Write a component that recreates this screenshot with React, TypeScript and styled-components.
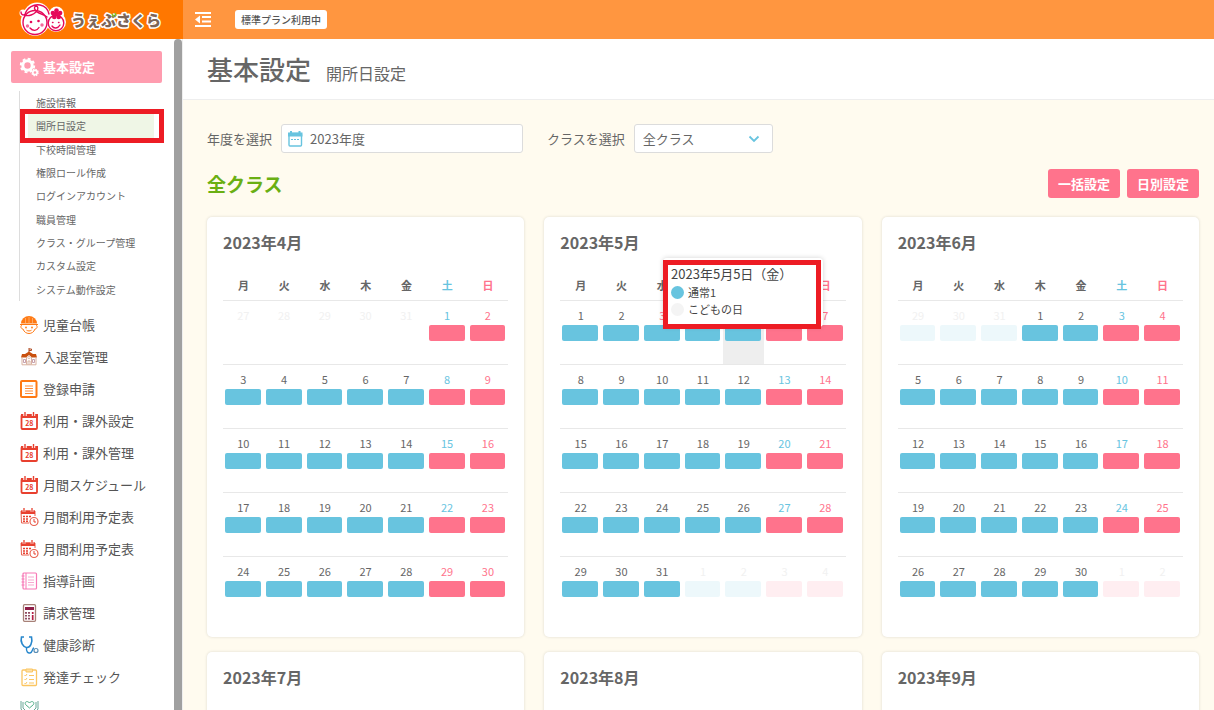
import React from 'react';
import styled, { createGlobalStyle, css } from 'styled-components';

const GlobalStyle = createGlobalStyle`
  *, *::before, *::after { box-sizing: border-box; }
  body {
    margin: 0;
    background: #fffbef;
    color: #666;
    font-family: 'Noto Sans CJK JP', 'Noto Sans', sans-serif;
    font-size: 13px;
  }
  button, input, select { font: inherit; color: inherit; }
  h1, h2, h3, p, ul { margin: 0; padding: 0; }
  ul { list-style: none; }
  a { color: inherit; text-decoration: none; }
`;

const blue = '#68c4df';
const pink = '#ff738c';

const Shell = styled.div`
  display: grid;
  grid-template-columns: 183px minmax(0, 1fr);
  grid-template-rows: 39px minmax(0, 1fr);
  height: 100vh;
  overflow: hidden;
`;

const Brand = styled.a`
  display: flex;
  align-items: center;
  padding-left: 19px;
  background: #ff7700;
`;

const TopBar = styled.header`
  display: flex;
  align-items: center;
  gap: 23px;
  padding-left: 12px;
  background: #ff9640;
`;

const MenuButton = styled.button`
  display: flex;
  padding: 0;
  border: 0;
  background: none;
  color: #fff;
`;

const PlanBadge = styled.span`
  padding: 0 6px;
  border-radius: 3px;
  background: #fff;
  color: #555;
  font-size: 10px;
  font-weight: 500;
  line-height: 19px;
`;

const Sidebar = styled.aside`
  display: flex;
  border-right: 1px solid #eee;
  background: #fff;
  overflow: hidden;
`;

const Nav = styled.nav`
  flex: 1;
  padding: 12px 12px 0 11px;
`;

const ScrollThumb = styled.div`
  width: 8px;
  border-radius: 4px 4px 0 0;
  background: #a0a0a0;
`;

const NavItem = styled.a<{ $active?: boolean }>`
  display: flex;
  align-items: center;
  gap: 5px;
  height: 32px;
  padding-left: 9px;
  white-space: nowrap;
  color: #555;
  ${(p) => p.$active && css`
    border-radius: 2px;
    background: #ff9caf;
    color: #fff;
    font-weight: 700;
  `}
  svg { flex: none; overflow: visible; }
`;

const NavLabel = styled.span`
  padding-bottom: 2px;
`;

const SubMenu = styled.ul`
  display: grid;
  grid-auto-rows: 1fr;
  height: 210px;
  margin: 8px 8px;
  border-left: 1px solid #ddd;
`;

const SubItem = styled.li<{ $active?: boolean }>`
  position: relative;
  display: flex;
  align-items: center;
  margin-left: 8px;
  padding-left: 8px;
  font-size: 10px;
  white-space: nowrap;
  background: ${(p) => (p.$active ? '#eff6e6' : 'transparent')};
`;

const RedFrame = styled.span`
  position: absolute;
  z-index: 3;
  border: 5px solid #ed1c24;
  pointer-events: none;
`;

const MenuFrame = styled(RedFrame)`
  inset: -5px -10px -5px -8px;
`;

const Main = styled.main`
  overflow: auto;
  scrollbar-width: none;
`;

const PageHead = styled.div`
  display: flex;
  align-items: baseline;
  gap: 15px;
  height: 61px;
  padding: 0 24px;
  border-bottom: 1px solid #eee;
  background: #fff;
  line-height: 59px;
`;

const PageTitle = styled.h1`
  font-size: 26px;
  font-weight: 500;
`;

const PageSubtitle = styled.p`
  font-size: 16px;
`;

const Content = styled.div`
  padding: 24px 15px 15px 24px;
`;

const Filters = styled.form`
  display: flex;
  gap: 24px;
`;

const Field = styled.div`
  display: flex;
  align-items: center;
  gap: 9px;
`;

const Control = styled.div<{ $width: number }>`
  display: flex;
  align-items: center;
  width: ${(p) => p.$width}px;
  height: 29px;
  padding: 0 12px 0 6px;
  border: 1px solid #dcdcdc;
  border-radius: 3px;
  background: #fff;
  input, select {
    flex: 1;
    min-width: 0;
    height: 27px;
    padding: 0;
    border: 0;
    outline: 0;
    background: none;
    appearance: none;
  }
  input { padding-left: 7px; }
  select { padding-left: 2px; }
`;

const ClassRow = styled.div`
  display: flex;
  align-items: center;
  justify-content: space-between;
  margin: 16px 0 19px;
`;

const ClassTitle = styled.h2`
  color: #6aaf13;
  font-size: 19px;
  font-weight: 700;
  line-height: 29px;
`;

const Actions = styled.div`
  display: flex;
  gap: 7px;
`;

const ActionButton = styled.button`
  width: 72px;
  height: 29px;
  padding: 0;
  border: 0;
  border-radius: 3px;
  background: ${pink};
  color: #fff;
  font-weight: 700;
`;

const Calendars = styled.div`
  display: grid;
  grid-template-columns: repeat(3, minmax(0, 1fr));
  gap: 15px 20px;
`;

const Card = styled.section`
  min-height: 420px;
  padding: 15px 16px;
  border-radius: 5px;
  background: #fff;
  box-shadow: 0 0 3px rgba(0, 0, 0, 0.14);
`;

const CardTitle = styled.h3`
  font-size: 16px;
  font-weight: 700;
  line-height: 20px;
`;

const MonthTable = styled.table`
  width: 100%;
  margin-top: 18px;
  border-collapse: collapse;
  table-layout: fixed;
  th, td { padding: 0; text-align: center; }
  th { height: 30px; font-size: 11px; font-weight: 700; }
  td { height: 64px; border-top: 1px solid #e8e8e8; font-size: 11px; vertical-align: top; }
`;

type Tone = 'text' | 'sat' | 'sun' | 'muted';
const toneColor: Record<Tone, string> = { text: '#666', sat: blue, sun: pink, muted: '#f1f1f1' };

const WeekDay = styled.th<{ $tone: Tone }>`
  color: ${(p) => toneColor[p.$tone]};
`;

const DayCell = styled.td<{ $hover: boolean }>`
  position: relative;
  background: ${(p) => (p.$hover ? '#eee' : 'transparent')};
`;

const DayNumber = styled.div<{ $tone: Tone }>`
  margin: 6px 0 1px;
  color: ${(p) => toneColor[p.$tone]};
  line-height: 17px;
`;

const Bar = styled.div<{ $color: string; $faded: boolean }>`
  height: 16px;
  margin: 0 3px 0 2px;
  border-radius: 2px;
  background: ${(p) => p.$color};
  opacity: ${(p) => (p.$faded ? 0.12 : 1)};
`;

const Tooltip = styled.div`
  position: absolute;
  z-index: 2;
  right: -59px;
  bottom: 37px;
  width: 160px;
  height: 69px;
  padding: 6px 8px;
  border-radius: 4px;
  background: #fff;
  box-shadow: 0 0 5px rgba(0, 0, 0, 0.18);
  color: #444;
  text-align: left;
  white-space: nowrap;
`;

const TooltipFrame = styled(RedFrame)`
  inset: 2px 2px -2px 0;
`;

const TooltipDate = styled.p`
  font-size: 13px;
  line-height: 20px;
`;

const TooltipLine = styled.p`
  display: flex;
  align-items: center;
  gap: 4px;
  font-size: 11px;
  line-height: 17px;
`;

const Dot = styled.span<{ $color: string }>`
  width: 13px;
  height: 13px;
  border-radius: 50%;
  background: ${(p) => p.$color};
`;

const Logo = () => (
  <svg width="146" height="36" viewBox="0 0 146 36" role="img" aria-label="うぇぶさくら">
    <g fill="#fff">
      <circle cx="16" cy="19.500" r="14.300" />
      <circle cx="18" cy="14" r="13.500" />
      <circle cx="4" cy="11" r="3.500" />
      <circle cx="37" cy="20" r="10" />
      <circle cx="37.500" cy="12" r="7.500" />
    </g>
    <g fill="none" stroke="#e5095a" strokeWidth="1.400" strokeLinecap="round">
      <circle cx="37" cy="21" r="7.800" />
      <circle cx="16" cy="20.500" r="12" fill="#fff" />
      <path d="M2 10c0 2.500 2 3.500 4 2.500C8 5 15 2 21 3c5 1 8 4 9 9M5 13c5 2 10-1 12-3 3-3 2-6 0-6-2.500.5-2 5 3 7 3 1.500 6 2 8 4" />
      <path d="M11 26c3 3.500 7 3 9-.5M33 24c2 3 6 2.500 8-1M33.500 20.500h.5M39.500 20.500h.5" />
    </g>
    <g fill="#e5095a">
      <circle cx="12" cy="20" r="1.300" /><circle cx="19.500" cy="19" r="1.300" />
      <circle cx="37.500" cy="8.500" r="2.300" /><circle cx="33.900" cy="11" r="2.300" /><circle cx="41.100" cy="11" r="2.300" />
      <circle cx="35.300" cy="15" r="2.300" /><circle cx="39.700" cy="15" r="2.300" /><circle cx="37.500" cy="12" r="2.500" />
    </g>
    <g fill="#f36a9a"><circle cx="8.500" cy="24" r="1.700" /><circle cx="23" cy="23" r="1.700" /></g>
    <text
      x="52" y="24" fontSize="15" fontWeight="900" fill="#7c6558" stroke="#fff" strokeWidth="3"
      strokeLinejoin="round" paintOrder="stroke" fontFamily="'Noto Sans CJK JP', sans-serif"
    >うぇぶさくら</text>
    <path d="M93 12l2 3M96 11l1 3" stroke="#7fc31c" strokeWidth="1.500" />
  </svg>
);

const OutdentIcon = () => (
  <svg width="17" height="15" viewBox="0 0 17 15" aria-hidden="true" fill="#fff">
    <path d="M0 0h16v2H0zM7 4h9v2H7zM7 8.500h9v2H7zM0 13h16v2H0zM5 3.500v8L0 7.500z" />
  </svg>
);

const GearsIcon = () => (
  <svg width="18" height="18" viewBox="0 0 18 18" aria-hidden="true" fill="none">
    <circle cx="7.500" cy="7.500" r="4.700" stroke="#fff" strokeWidth="3" />
    <circle cx="7.500" cy="7.500" r="6.700" stroke="#fff" strokeWidth="2" strokeDasharray="2.900 2.362" />
    <circle cx="15" cy="14.500" r="2.200" stroke="#fff" strokeWidth="1.700" />
    <circle cx="15" cy="14.500" r="3.200" stroke="#fff" strokeWidth="1.200" strokeDasharray="1.400 1.113" />
  </svg>
);

const svgProps = { width: 18, height: 18, viewBox: '0 0 18 18', 'aria-hidden': true, fill: 'none' } as const;

const ChildIcon = () => (
  <svg {...svgProps}>
    <path d="M1 7.500a8 7.500 0 0 1 16 0z" fill="#ff7a14" />
    <path d="M5.500 2v5M12.500 2v5M9 1v6" stroke="#ffb477" strokeWidth=".8" />
    <path d="M0 8.500h18M2 9c-2 1-1 4 1 4 1 3 3.500 4.500 6 4.500s5-1.500 6-4.500c2 0 3-3 1-4" stroke="#ff7a14" />
    <circle cx="6" cy="11.500" r=".9" fill="#ff7a14" /><circle cx="12" cy="11.500" r=".9" fill="#ff7a14" />
    <path d="M6.500 14.200c1.500 1 3.500 1 5 0" stroke="#ff7a14" />
  </svg>
);

const SchoolIcon = () => (
  <svg {...svgProps}>
    <path d="M9 0v5M9 1h2.500v1.500H9" stroke="#b04a20" />
    <path d="M9 3.500l4 2.500h3l1 3.500h-5L9 7 6 9.500H1L2 6h3z" fill="#c9500e" />
    <path d="M2 9.500v7.300h14V9.500M6.500 9v7.500M11.500 9v7.500M8 17v-4h2v4" stroke="#d9b2a0" />
    <circle cx="9" cy="9.500" r="1.200" stroke="#d9b2a0" strokeWidth=".8" />
    <path d="M3.500 11.500h2v3h-2zM12.500 11.500h2v3h-2z" stroke="#b98a9a" strokeWidth=".8" />
  </svg>
);

const ListIcon = () => (
  <svg {...svgProps}>
    <rect x="1" y="1" width="15.500" height="16" rx="1" stroke="#ff7a14" strokeWidth="2" />
    <path d="M5 6h8M5 8.500h8M5 11h8M5 13.500h8" stroke="#ff8d3a" />
  </svg>
);

const Calendar28Icon = () => (
  <svg {...svgProps}>
    <rect x="1.500" y="3" width="15.500" height="14" rx="1" stroke="#e8402f" strokeWidth="1.800" />
    <path d="M1 2h17v4H1z" fill="#e8402f" />
    <path d="M5 0v4M13.500 0v4" stroke="#fff" strokeWidth="3.400" />
    <path d="M5 0v4M13.500 0v4" stroke="#e8402f" strokeWidth="1.400" />
    <text x="9.300" y="14" textAnchor="middle" fontSize="7" fontWeight="700" fill="#e8402f" fontFamily="'Noto Sans CJK JP', sans-serif">28</text>
  </svg>
);

const CalendarClockIcon = () => (
  <svg {...svgProps}>
    <path d="M9 15H1.500L1 3h14v5" stroke="#e8604f" />
    <path d="M1 2.500h14V6H1z" fill="#e8402f" />
    <path d="M4 0v4M12 0v4" stroke="#fff" strokeWidth="2.600" />
    <path d="M4 0v4M12 0v4" stroke="#e8402f" strokeWidth="1.300" />
    <path d="M3 8.500h9M3 11h6M3 13.200h5" stroke="#e8402f" strokeWidth="1.500" strokeDasharray="2 1" />
    <circle cx="14" cy="13.500" r="4" fill="#fff" stroke="#e8604f" strokeWidth="1.200" />
    <path d="M14 11v3h2" stroke="#e8402f" />
  </svg>
);

const NotebookIcon = () => (
  <svg {...svgProps}>
    <rect x="3" y="1" width="13.500" height="16" rx="1" stroke="#f779b6" strokeWidth="1.200" />
    <path d="M6 1v16M1.500 4h3M1.500 7h3M1.500 10h3M1.500 13h3" stroke="#f779b6" />
    <path d="M8 5h6M8 8h6M8 10.500h6M8 13h6" stroke="#f7a9cf" />
  </svg>
);

const CalculatorIcon = () => (
  <svg {...svgProps}>
    <rect x="3.500" y=".7" width="12" height="16.600" rx="1" stroke="#a78178" strokeWidth="1.300" />
    <path d="M5 3h9v3H5z" fill="#8f1d48" />
    <path d="M6 8v8M9 8v8" stroke="#7e2f48" strokeWidth="1.700" strokeDasharray="1.700 1.200" />
    <path d="M12.700 8v2M12.700 11v5" stroke="#b32045" strokeWidth="1.700" />
  </svg>
);

const StethoscopeIcon = () => (
  <svg {...svgProps}>
    <path d="M4 1H1.500C0 6 3 11 6.500 11.500S13 7 11.500 1H9" stroke="#2787cc" strokeWidth="1.600" />
    <path d="M6.500 11.500C6 16 8 17.300 10 17c3-.5 2-5 4-5" stroke="#2787cc" strokeWidth="1.400" />
    <circle cx="16" cy="14.500" r="2" stroke="#5a8eb5" strokeWidth="1.200" />
  </svg>
);

const ChecklistIcon = () => (
  <svg {...svgProps}>
    <rect x="2" y="2" width="14.500" height="15.500" rx="1" stroke="#fbc561" strokeWidth="1.300" />
    <path d="M6 1h6.500v3H6z" fill="#fde0a6" stroke="#fbc561" />
    <path d="M4.500 7l1 1 1.500-2M4.500 11l1 1 1.500-2M4.500 15l1 1 1.500-2M9 7.500h5M9 11.500h5M9 15h5" stroke="#fbc561" />
  </svg>
);

const HandsHeartIcon = () => (
  <svg {...svgProps}>
    <path d="M9.500 8L5.500 4.500C4 1.500 8 .5 9.500 3c1.500-2.500 5.500-1.500 4 1.500z" stroke="#4fae86" />
    <path d="M1 1v8l6 7v2M18 1v8l-6 7v2M3 2v6l4 4M16 2v6l-4 4" stroke="#6aa898" />
  </svg>
);

const DateIcon = () => (
  <svg width="15" height="16" viewBox="0 0 15 16" aria-hidden="true" fill="none">
    <rect x="1" y="2.500" width="12.500" height="12.500" rx="1" stroke={blue} strokeWidth="1.400" />
    <path d="M0 1.500h14.500v4H0zM2 0h2v3H2zM10.500 0h2v3h-2z" fill={blue} />
    <path d="M3 8.500h9" stroke={blue} strokeWidth="1.200" strokeDasharray="2 1" />
  </svg>
);

const ChevronIcon = () => (
  <svg width="12" height="8" viewBox="0 0 12 8" aria-hidden="true" fill="none">
    <path d="M1.500 1.500L6 6l4.500-4.500" stroke={blue} strokeWidth="1.800" />
  </svg>
);

const subItems = [
  '施設情報', '開所日設定', '下校時間管理', '権限ロール作成', 'ログインアカウント',
  '職員管理', 'クラス・グループ管理', 'カスタム設定', 'システム動作設定',
];

const navItems: { label: string; Icon: React.FC }[] = [
  { label: '児童台帳', Icon: ChildIcon },
  { label: '入退室管理', Icon: SchoolIcon },
  { label: '登録申請', Icon: ListIcon },
  { label: '利用・課外設定', Icon: Calendar28Icon },
  { label: '利用・課外管理', Icon: Calendar28Icon },
  { label: '月間スケジュール', Icon: Calendar28Icon },
  { label: '月間利用予定表', Icon: CalendarClockIcon },
  { label: '月間利用予定表', Icon: CalendarClockIcon },
  { label: '指導計画', Icon: NotebookIcon },
  { label: '請求管理', Icon: CalculatorIcon },
  { label: '健康診断', Icon: StethoscopeIcon },
  { label: '発達チェック', Icon: ChecklistIcon },
  { label: '', Icon: HandsHeartIcon },
];

const weekDays = ['月', '火', '水', '木', '金', '土', '日'];

interface MonthData {
  title: string;
  lead: number;
  leadFrom: number;
  leadBars?: boolean;
  days: number;
  holidays?: number[];
  hovered?: number;
}

const months: MonthData[] = [
  { title: '2023年4月', lead: 5, leadFrom: 27, days: 30, holidays: [29] },
  { title: '2023年5月', lead: 0, leadFrom: 1, days: 31, holidays: [3, 4, 5], hovered: 5 },
  { title: '2023年6月', lead: 3, leadFrom: 29, leadBars: true, days: 30 },
];

const laterMonths = ['2023年7月', '2023年8月', '2023年9月'];

const columnTone = (col: number): Tone => (col === 5 ? 'sat' : col === 6 ? 'sun' : 'text');

const DayTooltip = () => (
  <Tooltip role="tooltip">
    <TooltipDate>2023年5月5日（金）</TooltipDate>
    <TooltipLine><Dot $color={blue} />通常1</TooltipLine>
    <TooltipLine><Dot $color="#f4f4f4" />こどもの日</TooltipLine>
    <TooltipFrame />
  </Tooltip>
);

const Day = ({ month, index }: { month: MonthData; index: number }) => {
  const col = index % 7;
  const day = index - month.lead + 1;
  const before = day < 1;
  const outside = before || day > month.days;
  const shown = before ? month.leadFrom + index : outside ? day - month.days : day;
  const tone: Tone = outside ? 'muted' : month.holidays?.includes(day) ? 'sun' : columnTone(col);
  const hovered = !outside && month.hovered === day;
  return (
    <DayCell $hover={hovered}>
      <DayNumber $tone={tone}>{before && month.leadBars ? ((shown - 1) % 31) + 1 : shown}</DayNumber>
      {(!before || month.leadBars) && <Bar $color={col > 4 ? pink : blue} $faded={outside} />}
      {hovered && <DayTooltip />}
    </DayCell>
  );
};

const MonthCard = ({ month }: { month: MonthData }) => (
  <Card>
    <CardTitle>{month.title}</CardTitle>
    <MonthTable>
      <thead>
        <tr>{weekDays.map((d, i) => <WeekDay key={d} scope="col" $tone={columnTone(i)}>{d}</WeekDay>)}</tr>
      </thead>
      <tbody>
        {[0, 1, 2, 3, 4].map((week) => (
          <tr key={week}>
            {weekDays.map((d, col) => <Day key={d} month={month} index={week * 7 + col} />)}
          </tr>
        ))}
      </tbody>
    </MonthTable>
  </Card>
);

export default function App() {
  return (
    <>
      <GlobalStyle />
      <Shell>
        <Brand href="#"><Logo /></Brand>
        <TopBar>
          <MenuButton type="button" aria-label="メニュー"><OutdentIcon /></MenuButton>
          <PlanBadge>標準プラン利用中</PlanBadge>
        </TopBar>
        <Sidebar>
          <Nav>
            <NavItem href="#" $active><GearsIcon /><NavLabel>基本設定</NavLabel></NavItem>
            <SubMenu>
              {subItems.map((label, i) => (
                <SubItem key={label} $active={i === 1}>
                  <a href="#">{label}</a>
                  {i === 1 && <MenuFrame />}
                </SubItem>
              ))}
            </SubMenu>
            {navItems.map(({ label, Icon }, i) => (
              <NavItem key={i} href="#"><Icon /><NavLabel>{label}</NavLabel></NavItem>
            ))}
          </Nav>
          <ScrollThumb />
        </Sidebar>
        <Main>
          <PageHead>
            <PageTitle>基本設定</PageTitle>
            <PageSubtitle>開所日設定</PageSubtitle>
          </PageHead>
          <Content>
            <Filters>
              <Field>
                <label htmlFor="year">年度を選択</label>
                <Control $width={242}>
                  <DateIcon />
                  <input id="year" defaultValue="2023年度" />
                </Control>
              </Field>
              <Field>
                <label htmlFor="class">クラスを選択</label>
                <Control $width={139}>
                  <select id="class"><option>全クラス</option></select>
                  <ChevronIcon />
                </Control>
              </Field>
            </Filters>
            <ClassRow>
              <ClassTitle>全クラス</ClassTitle>
              <Actions>
                <ActionButton type="button">一括設定</ActionButton>
                <ActionButton type="button">日別設定</ActionButton>
              </Actions>
            </ClassRow>
            <Calendars>
              {months.map((m) => <MonthCard key={m.title} month={m} />)}
              {laterMonths.map((title) => <Card key={title}><CardTitle>{title}</CardTitle></Card>)}
            </Calendars>
          </Content>
        </Main>
      </Shell>
    </>
  );
}
